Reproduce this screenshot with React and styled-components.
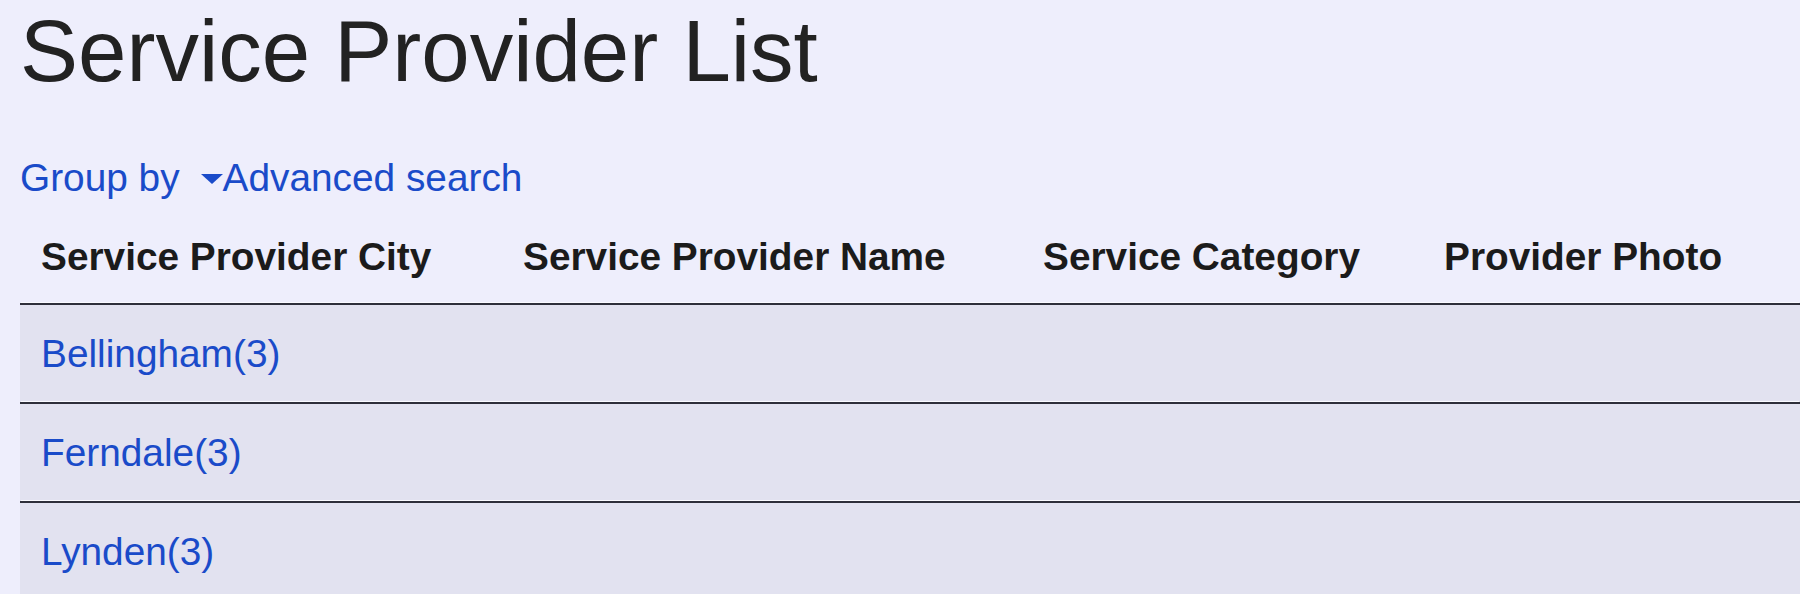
import React from 'react';
import styled, { createGlobalStyle } from 'styled-components';

const GlobalStyle = createGlobalStyle`
  html, body {
    margin: 0;
    padding: 0;
    background: #eeeefc;
    overflow: hidden;
  }
  body {
    font-family: "Liberation Sans", Arial, sans-serif;
    font-size: 38.8px;
    color: #222;
  }
`;

const Page = styled.div`
  padding-left: 20px;
  min-height: 594px;
`;

const Title = styled.h1`
  margin: 0;
  padding-top: 1px;
  font-size: 87px;
  font-weight: normal;
  line-height: normal;
  color: #222;
`;

const Toolbar = styled.div`
  display: flex;
  align-items: center;
  margin-top: 55px;
  line-height: normal;
`;

const Link = styled.a`
  color: #1a4bc9;
  text-decoration: none;
  cursor: pointer;
  display: inline-flex;
  align-items: center;
`;

const Caret = styled.span`
  display: inline-block;
  width: 0;
  height: 0;
  margin-left: 21px;
  margin-right: 0;
  margin-top: 2px;
  border-left: 11px solid transparent;
  border-right: 11px solid transparent;
  border-top: 10px solid #1a4bc9;
`;

const Table = styled.table`
  margin-top: 11px;
  width: 1780px;
  border-collapse: collapse;
  table-layout: fixed;
`;

const Head = styled.th`
  text-align: left;
  font-weight: bold;
  padding: 24px 20px 24px 21px;
  line-height: normal;
  white-space: nowrap;
  color: #1b1b1b;
`;

const Row = styled.tr`
  background: #e2e2f0;
  border-top: 2px solid #2e2f3a;
  box-shadow: 0 -3px 0 -1px #fafaff;
`;

const Cell = styled.td`
  padding: 27px 20px 26px 21px;
  line-height: normal;
`;

const groups = [
  { city: 'Bellingham', count: 3 },
  { city: 'Ferndale', count: 3 },
  { city: 'Lynden', count: 3 },
];

export default function App() {
  return (
    <Page>
      <GlobalStyle />
      <Title>Service Provider List</Title>
      <Toolbar>
        <Link>Group by</Link>
        <Link>
          <Caret />
          Advanced search
        </Link>
      </Toolbar>
      <Table>
        <colgroup>
          <col style={{ width: 482 }} />
          <col style={{ width: 520 }} />
          <col style={{ width: 401 }} />
          <col />
        </colgroup>
        <thead>
          <tr>
            <Head>Service Provider City</Head>
            <Head>Service Provider Name</Head>
            <Head>Service Category</Head>
            <Head>Provider Photo</Head>
          </tr>
        </thead>
        <tbody>
          {groups.map((g) => (
            <Row key={g.city}>
              <Cell colSpan={4}>
                <Link>
                  {g.city}({g.count})
                </Link>
              </Cell>
            </Row>
          ))}
        </tbody>
      </Table>
    </Page>
  );
}
